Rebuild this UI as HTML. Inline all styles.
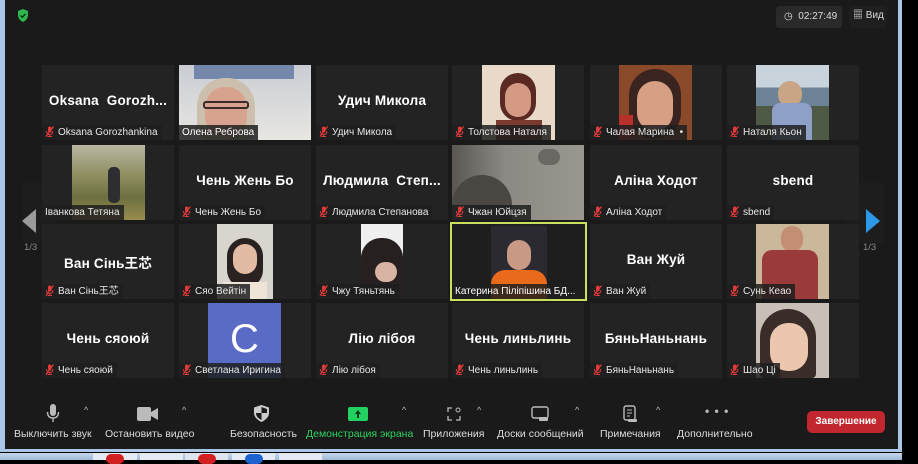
<!DOCTYPE html>
<html><head><meta charset="utf-8">
<style>
*{margin:0;padding:0;box-sizing:border-box}
body{width:918px;height:460px;overflow:hidden;background:#000;font-family:"Liberation Sans","Noto Sans CJK SC",sans-serif;position:relative}
#win{position:absolute;left:0;top:0;width:902px;height:452px;background:#1a1a1a;border-left:5px solid #a9c6e6;border-right:4px solid #a9c6e6;border-bottom:3px solid #a9c6e6}
.t{position:absolute;width:132px;height:75px;background:#232323;overflow:hidden}
.big{position:absolute;left:0;right:0;top:28px;text-align:center;color:#fff;font-weight:bold;font-size:13.5px;white-space:nowrap;letter-spacing:.2px}
.lab{position:absolute;left:0;bottom:0;height:15px;background:rgba(30,30,30,.85);color:#e8e8e8;font-size:10px;line-height:15px;padding:0 4px 0 3px;white-space:nowrap}
.mic{display:inline-block;width:9px;height:11px;vertical-align:-2px;margin-right:4px}
.ph{position:absolute;top:0;height:75px}
.tb{position:absolute;top:404px;text-align:center;color:#ddd;font-size:10.5px;white-space:nowrap}
.car{position:absolute;top:405px;color:#bbb;font-size:9px}
</style></head><body>
<div id="win"></div>
<!-- shield -->
<svg style="position:absolute;left:17px;top:9px" width="12" height="13" viewBox="0 0 12 13"><path d="M6 0L11 2V6C11 9 9 11.5 6 13C3 11.5 1 9 1 6V2Z" fill="#2fb84d"/><path d="M3.5 6.5L5.3 8.2L8.5 4.8" stroke="#0b3315" stroke-width="1.4" fill="none"/></svg>
<!-- timer -->
<div style="position:absolute;left:776px;top:6px;width:66px;height:22px;background:#2a2a2a;border-radius:3px;color:#ddd;font-size:10px;line-height:22px;padding-left:8px">◷&nbsp; 02:27:49</div>
<div style="position:absolute;left:849px;top:6px;width:38px;height:22px;background:#1f1f1f;border-radius:3px;color:#ddd;font-size:10px;line-height:20px;padding-left:4px">▦ Вид</div>

<!-- nav -->
<div style="position:absolute;left:22px;top:183px;width:33px;height:60px;background:#1d1d1d"></div>
<svg style="position:absolute;left:22px;top:209px" width="14" height="24"><path d="M14 0V24L0 12Z" fill="#9a9a9a"/></svg>
<div style="position:absolute;left:24px;top:242px;color:#888;font-size:9.5px">1/3</div>
<div style="position:absolute;left:846px;top:183px;width:38px;height:60px;background:#1d1d1d"></div>
<svg style="position:absolute;left:866px;top:209px" width="14" height="24"><path d="M0 0V24L14 12Z" fill="#2c98e8"/></svg>
<div style="position:absolute;left:863px;top:242px;color:#888;font-size:9.5px">1/3</div>

<svg width="0" height="0" style="position:absolute"><defs><symbol id="m" viewBox="0 0 9 11"><rect x="3" y="0.5" width="3.5" height="6" rx="1.7" fill="#e03a3a"/><path d="M1.5 5Q1.5 8.5 4.7 8.5Q7.8 8.5 7.8 5M4.7 8.5V10.5M2.5 10.5H7" stroke="#e03a3a" stroke-width="1" fill="none"/><path d="M1 10.5L8.5 0.5" stroke="#e03a3a" stroke-width="1.3"/></symbol></defs></svg>

<!-- Row 1 -->
<div class="t" style="left:42px;top:65px"><div class="big">Oksana&nbsp; Gorozh...</div><div class="lab"><svg class="mic"><use href="#m"/></svg>Oksana Gorozhankina</div></div>
<div class="t" style="left:179px;top:65px;background:linear-gradient(#c9cdd3,#e8e6e2)"><div style="position:absolute;left:15px;top:0;width:100px;height:14px;background:#4e6a9a;opacity:.7"></div><div style="position:absolute;left:18px;top:13px;width:58px;height:62px;border-radius:28px 28px 10px 10px;background:#cdbfad"></div><div style="position:absolute;left:26px;top:22px;width:42px;height:50px;border-radius:20px;background:#d8a38e"></div><div style="position:absolute;left:24px;top:36px;width:46px;height:8px;border:2px solid #3a2a2a;border-radius:3px"></div><div class="lab" style="color:#fff">Олена Реброва</div></div>
<div class="t" style="left:316px;top:65px"><div class="big">Удич Микола</div><div class="lab"><svg class="mic"><use href="#m"/></svg>Удич Микола</div></div>
<div class="t" style="left:452px;top:65px"><div class="ph" style="left:30px;width:73px;background:#e8d9c8"><div style="position:absolute;left:18px;top:8px;width:36px;height:48px;border-radius:18px;background:#5a2a22"></div><div style="position:absolute;left:23px;top:18px;width:26px;height:34px;border-radius:13px;background:#d49a84"></div><div style="position:absolute;left:14px;top:55px;width:46px;height:20px;background:#7a3a30"></div></div><div class="lab"><svg class="mic"><use href="#m"/></svg>Толстова Наталя</div></div>
<div class="t" style="left:590px;top:65px"><div class="ph" style="left:29px;width:73px;background:#8a4a2a"><div style="position:absolute;left:10px;top:4px;width:52px;height:70px;border-radius:26px;background:#3a2420"></div><div style="position:absolute;left:18px;top:16px;width:36px;height:50px;border-radius:18px;background:#d7a084"></div><div style="position:absolute;left:0;top:50px;width:14px;height:25px;background:#b8302a"></div></div><div class="lab"><svg class="mic"><use href="#m"/></svg>Чалая Марина&nbsp; •</div></div>
<div class="t" style="left:727px;top:65px"><div class="ph" style="left:29px;width:73px;background:linear-gradient(#c9d3dc 0,#c9d3dc 30%,#6c8296 30%,#6c8296 55%,#4e5a46 55%)"><div style="position:absolute;left:22px;top:16px;width:24px;height:26px;border-radius:12px;background:#c9a585"></div><div style="position:absolute;left:16px;top:38px;width:40px;height:37px;background:#8fa0c8;border-radius:8px 8px 0 0"></div></div><div class="lab"><svg class="mic"><use href="#m"/></svg>Наталя Кьон</div></div>

<!-- Row 2 -->
<div class="t" style="left:42px;top:145px"><div class="ph" style="left:30px;width:73px;background:linear-gradient(#b8b6a0,#8a8a5a 45%,#6c7040 70%,#9a8c50)"><div style="position:absolute;left:36px;top:22px;width:12px;height:36px;background:#2e2e32;border-radius:5px"></div></div><div class="lab">Іванкова Тетяна</div></div>
<div class="t" style="left:179px;top:145px"><div class="big">Чень Жень Бо</div><div class="lab"><svg class="mic"><use href="#m"/></svg>Чень Жень Бо</div></div>
<div class="t" style="left:316px;top:145px"><div class="big">Людмила&nbsp; Степ...</div><div class="lab"><svg class="mic"><use href="#m"/></svg>Людмила Степанова</div></div>
<div class="t" style="left:452px;top:145px;background:linear-gradient(90deg,#5a5752,#8c8984 40%,#9a9790)"><div style="position:absolute;left:86px;top:4px;width:22px;height:16px;border-radius:11px;background:#6b6762"></div><div style="position:absolute;left:0;top:30px;width:60px;height:45px;border-radius:30px 30px 0 0;background:#4a4642"></div><div class="lab"><svg class="mic"><use href="#m"/></svg>Чжан Юйцзя</div></div>
<div class="t" style="left:590px;top:145px"><div class="big">Аліна Ходот</div><div class="lab"><svg class="mic"><use href="#m"/></svg>Аліна Ходот</div></div>
<div class="t" style="left:727px;top:145px"><div class="big">sbend</div><div class="lab"><svg class="mic"><use href="#m"/></svg>sbend</div></div>

<!-- Row 3 -->
<div class="t" style="left:42px;top:224px"><div class="big">Ван Сінь王芯</div><div class="lab"><svg class="mic"><use href="#m"/></svg>Ван Сінь王芯</div></div>
<div class="t" style="left:179px;top:224px"><div class="ph" style="left:38px;width:56px;background:#d8d4ce"><div style="position:absolute;left:10px;top:14px;width:36px;height:50px;border-radius:18px;background:#2a2220"></div><div style="position:absolute;left:16px;top:20px;width:24px;height:30px;border-radius:12px;background:#e2bba4"></div><div style="position:absolute;left:6px;top:58px;width:44px;height:17px;background:#efe4d8"></div></div><div class="lab"><svg class="mic"><use href="#m"/></svg>Сяо Вейтін</div></div>
<div class="t" style="left:316px;top:224px"><div class="ph" style="left:45px;width:42px;background:#efefef"><div style="position:absolute;left:0;top:14px;width:42px;height:61px;border-radius:20px 20px 0 0;background:#262020"></div><div style="position:absolute;left:14px;top:38px;width:22px;height:20px;border-radius:10px;background:#d7b4a4"></div></div><div class="lab"><svg class="mic"><use href="#m"/></svg>Чжу Тяньтянь</div></div>
<div class="t" style="left:450px;top:222px;width:137px;height:79px;border:2px solid #c9e05a;background:#1e1e1e"><div class="ph" style="left:39px;top:2px;width:56px;background:#2a2a30"><div style="position:absolute;left:16px;top:14px;width:24px;height:30px;border-radius:12px;background:#c89a86"></div><div style="position:absolute;left:0;top:44px;width:56px;height:30px;border-radius:14px 14px 0 0;background:#e96a1a"></div></div><div class="lab" style="color:#fff">Катерина Піліпішина БД...</div></div>
<div class="t" style="left:590px;top:224px"><div class="big">Ван Жуй</div><div class="lab"><svg class="mic"><use href="#m"/></svg>Ван Жуй</div></div>
<div class="t" style="left:727px;top:224px"><div class="ph" style="left:29px;width:73px;background:#cbb89a"><div style="position:absolute;left:25px;top:2px;width:22px;height:26px;border-radius:11px;background:#c48e74"></div><div style="position:absolute;left:6px;top:26px;width:56px;height:49px;border-radius:10px 10px 0 0;background:#9a3a3a"></div></div><div class="lab"><svg class="mic"><use href="#m"/></svg>Сунь Кеао</div></div>

<!-- Row 4 -->
<div class="t" style="left:42px;top:303px"><div class="big">Чень сяоюй</div><div class="lab"><svg class="mic"><use href="#m"/></svg>Чень сяоюй</div></div>
<div class="t" style="left:179px;top:303px"><div style="position:absolute;left:29px;top:0;width:73px;height:75px;background:#5a6bc6;color:#fff;font-size:40px;line-height:72px;text-align:center">C</div><div class="lab"><svg class="mic"><use href="#m"/></svg>Светлана Иригина</div></div>
<div class="t" style="left:316px;top:303px"><div class="big">Лію лібоя</div><div class="lab"><svg class="mic"><use href="#m"/></svg>Лію лібоя</div></div>
<div class="t" style="left:452px;top:303px"><div class="big">Чень линьлинь</div><div class="lab"><svg class="mic"><use href="#m"/></svg>Чень линьлинь</div></div>
<div class="t" style="left:590px;top:303px"><div class="big">БяньНаньнань</div><div class="lab"><svg class="mic"><use href="#m"/></svg>БяньНаньнань</div></div>
<div class="t" style="left:727px;top:303px"><div class="ph" style="left:29px;width:73px;background:#c8c0b6"><div style="position:absolute;left:4px;top:6px;width:56px;height:69px;border-radius:28px 28px 4px 4px;background:#3a2c28"></div><div style="position:absolute;left:14px;top:20px;width:38px;height:48px;border-radius:18px;background:#ecc7b0"></div></div><div class="lab"><svg class="mic"><use href="#m"/></svg>Шао Ці</div></div>

<!-- toolbar -->
<svg style="position:absolute;left:46px;top:404px" width="14" height="20"><rect x="4" y="0" width="6" height="12" rx="3" fill="#bbb"/><path d="M1.5 8Q1.5 14 7 14Q12.5 14 12.5 8M7 14V18" stroke="#bbb" stroke-width="1.4" fill="none"/></svg>
<div class="car" style="left:84px">^</div>
<div class="tb" style="left:14px;top:428px">Выключить звук</div>
<svg style="position:absolute;left:137px;top:407px" width="21" height="14"><rect x="0" y="0" width="14" height="14" rx="2" fill="#bbb"/><path d="M14 5L21 1V13L14 9Z" fill="#bbb"/></svg>
<div class="car" style="left:182px">^</div>
<div class="tb" style="left:105px;top:428px">Остановить видео</div>
<svg style="position:absolute;left:254px;top:405px" width="15" height="17" viewBox="0 0 15 17"><path d="M7.5 0L15 2.5V8C15 12 11.5 15 7.5 17C3.5 15 0 12 0 8V2.5Z" fill="#ccc"/><path d="M7.5 2L13 4V8H7.5V15C4.5 13.5 2 11.5 2 8H7.5Z" fill="#1a1a1a"/></svg>
<div class="tb" style="left:230px;top:428px">Безопасность</div>
<div style="position:absolute;left:348px;top:407px;width:20px;height:14px;background:#23d160;border-radius:2px"><svg width="20" height="14"><path d="M10 3L13 7H11V11H9V7H7Z" fill="#0a3a18"/></svg></div>
<div class="car" style="left:402px">^</div>
<div class="tb" style="left:306px;top:428px;color:#2bd15e">Демонстрация экрана</div>
<svg style="position:absolute;left:447px;top:407px" width="14" height="14"><path d="M1 5V1H5M1 9V13H5M9 13H13V9" stroke="#bbb" stroke-width="1.3" fill="none"/><circle cx="11" cy="3" r="2" stroke="#bbb" fill="none"/></svg>
<div class="car" style="left:477px">^</div>
<div class="tb" style="left:423px;top:428px">Приложения</div>
<svg style="position:absolute;left:531px;top:406px" width="18" height="16"><rect x="1" y="1" width="16" height="11" rx="2" stroke="#bbb" stroke-width="1.4" fill="none"/><rect x="8" y="11" width="9" height="4" rx="1" fill="#bbb"/></svg>
<div class="car" style="left:575px">^</div>
<div class="tb" style="left:497px;top:428px">Доски сообщений</div>
<svg style="position:absolute;left:623px;top:405px" width="14" height="18"><rect x="1" y="1" width="11" height="14" rx="2" stroke="#bbb" stroke-width="1.4" fill="none"/><path d="M4 5H9M4 8H9M4 11H7" stroke="#bbb" stroke-width="1"/><rect x="5" y="14" width="9" height="3" rx="1" fill="#bbb"/></svg>
<div class="car" style="left:656px">^</div>
<div class="tb" style="left:600px;top:428px">Примечания</div>
<div style="position:absolute;left:705px;top:404px;color:#bbb;font-size:12px;letter-spacing:1px;font-weight:bold">• • •</div>
<div class="tb" style="left:677px;top:428px">Дополнительно</div>
<div style="position:absolute;left:807px;top:411px;width:78px;height:22px;background:#c2262e;border-radius:5px;color:#fff;font-size:10px;font-weight:bold;text-align:center;line-height:22px">Завершение</div>

<!-- taskbar -->
<div style="position:absolute;left:0;top:453px;width:902px;height:7px;background:linear-gradient(#c7d7ea,#9fb8d6)"></div>
<div style="position:absolute;left:93px;top:453px;width:44px;height:7px;background:#e4eaf2"><div style="margin:1px auto;width:18px;height:10px;border-radius:9px;background:#d32020"></div></div>
<div style="position:absolute;left:140px;top:453px;width:43px;height:7px;background:#e4eaf2"></div>
<div style="position:absolute;left:185px;top:453px;width:43px;height:7px;background:#dde4ee"><div style="margin:1px auto;width:18px;height:10px;border-radius:9px;background:#d32020"></div></div>
<div style="position:absolute;left:232px;top:453px;width:43px;height:7px;background:#e4eaf2"><div style="margin:1px auto;width:18px;height:10px;border-radius:9px;background:#1e62d0"></div></div>
<div style="position:absolute;left:279px;top:453px;width:43px;height:7px;background:#e4eaf2"></div>
</body></html>
